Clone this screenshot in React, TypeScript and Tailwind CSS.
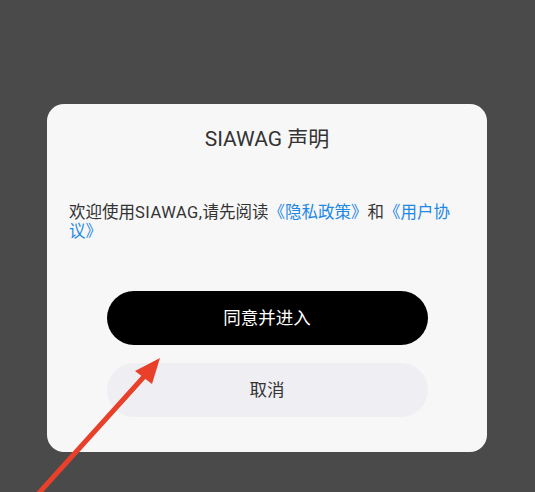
const cjk = {
  fontFamily: '"Roboto", "Noto Sans CJK SC", sans-serif',
};

function Arrow() {
  return (
    <svg
      className="absolute left-0 top-0 pointer-events-none"
      width="535"
      height="492"
      viewBox="0 0 535 492"
    >
      <line
        x1="38"
        y1="494"
        x2="150"
        y2="370"
        stroke="#e8402a"
        strokeWidth="5"
        strokeLinecap="round"
      />
      <polygon points="160,358 135,371 152,384" fill="#e8402a" />
    </svg>
  );
}

export default function App() {
  return (
    <div
      className="relative w-[535px] h-[492px] bg-[#4a4a4a] overflow-hidden"
      style={cjk}
    >
      <div className="absolute left-[47px] top-[104px] w-[440px] h-[348px] rounded-[17px] bg-[#f7f7f7] flex flex-col">
        <h1 className="pt-[21px] text-center text-[21px] leading-[28px] text-[#333333]">
          SIAWAG 声明
        </h1>
        <p className="mt-[50px] pl-[22px] pr-[28px] text-[16.5px] leading-[19px] text-[#333333] break-all">
          欢迎使用<span className="tracking-[0.5px]">SIAWAG,</span>请先阅读
          <span className="text-[#1e88e5]">《隐私政策》</span>和
          <span className="text-[#1e88e5]">《用户协议》</span>
        </p>
        <div className="mt-[50px] flex flex-col items-center gap-[18px]">
          <button className="w-[321px] h-[54px] rounded-full bg-black text-white text-[17.5px]">
            同意并进入
          </button>
          <button className="w-[321px] h-[54px] rounded-full bg-[#efeff3] text-[#333333] text-[17.5px]">
            取消
          </button>
        </div>
      </div>
      <Arrow />
    </div>
  );
}
